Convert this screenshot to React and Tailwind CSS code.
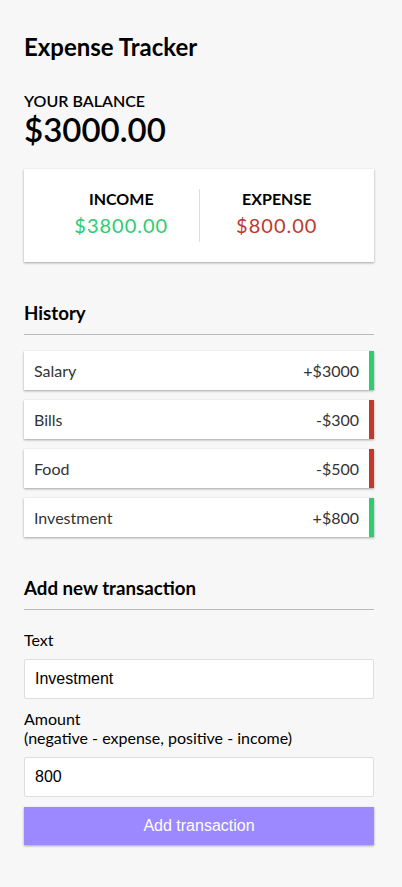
import { useState } from 'react'

// Expense Tracker – single page

const shadow = 'shadow-[0_1px_3px_rgba(0,0,0,0.12),0_1px_2px_rgba(0,0,0,0.24)]'

function Item({ text, amount }) {
  const plus = amount > 0
  return (
    <li
      className={`bg-white text-[#333] flex justify-between p-[10px] my-[10px] leading-[19px] ${shadow} ${
        plus ? 'border-r-[5px] border-[#2ecc71]' : 'border-r-[5px] border-[#c0392b]'
      }`}
    >
      <span>{text}</span>
      <span>{plus ? '+' : '-'}${Math.abs(amount)}</span>
    </li>
  )
}

export default function App() {
  const [text, setText] = useState('Investment')
  const [amount, setAmount] = useState('800')

  const items = [
    { id: 1, text: 'Salary', amount: 3000 },
    { id: 2, text: 'Bills', amount: -300 },
    { id: 3, text: 'Food', amount: -500 },
    { id: 4, text: 'Investment', amount: 800 },
  ]

  return (
    <div className="min-h-screen bg-[#f7f7f7] font-['Lato',sans-serif] text-[16px] text-black">
      <div className="w-[350px] ml-[24px] pt-[33px] pb-[30px]">
        <h2 className="text-[24px] font-bold leading-[28.8px]">Expense Tracker</h2>

        <h4 className="mt-[29px] text-[16px] font-semibold uppercase leading-[19.2px]">Your Balance</h4>
        <h1 className="text-[33px] font-semibold leading-[39px]">$3000.00</h1>

        {/* income / expense */}
        <div className={`bg-white p-[20px] flex justify-between my-[20px] ${shadow}`}>
          <div className="flex-1 text-center border-r border-[#dedede]">
            <h4 className="font-bold uppercase leading-[19.2px]">Income</h4>
            <p className="text-[20px] tracking-[1px] my-[5px] leading-[24px] text-[#2ecc71]">$3800.00</p>
          </div>
          <div className="flex-1 text-center">
            <h4 className="font-bold uppercase leading-[19.2px]">Expense</h4>
            <p className="text-[20px] tracking-[1px] my-[5px] leading-[24px] text-[#c0392b]">$800.00</p>
          </div>
        </div>

        {/* history */}
        <h3 className="mt-[40px] text-[18.72px] font-bold leading-[22px] pb-[10px] border-b border-[#bbb]">History</h3>
        <ul className="mt-[16px] mb-[40px]">
          {items.map(i => (
            <Item key={i.id} text={i.text} amount={i.amount} />
          ))}
        </ul>

        {/* form */}
        <h3 className="text-[18.72px] font-bold leading-[22px] pb-[10px] border-b border-[#bbb] mb-[10px]">
          Add new transaction
        </h3>
        <form onSubmit={e => e.preventDefault()}>
          <div>
            <label className="inline-block my-[10px] leading-[19px]">Text</label>
            <input
              type="text"
              value={text}
              onChange={e => setText(e.target.value)}
              className="block w-full bg-white border border-[#dedede] rounded-[2px] p-[10px] text-[16px] leading-[18px] font-['Liberation_Sans',Arial,sans-serif] outline-none"
            />
          </div>
          <div>
            <label className="inline-block my-[10px] leading-[19px]">
              Amount <br />
              (negative - expense, positive - income)
            </label>
            <input
              type="number"
              value={amount}
              onChange={e => setAmount(e.target.value)}
              className="block w-full bg-white border border-[#dedede] rounded-[2px] p-[10px] text-[16px] leading-[18px] font-['Liberation_Sans',Arial,sans-serif] outline-none"
            />
          </div>
          <button
            className={`block w-full bg-[#9c88ff] text-white text-[16px] leading-[18px] p-[10px] mt-[10px] mb-[30px] font-['Liberation_Sans',Arial,sans-serif] ${shadow}`}
          >
            Add transaction
          </button>
        </form>
      </div>
    </div>
  )
}
